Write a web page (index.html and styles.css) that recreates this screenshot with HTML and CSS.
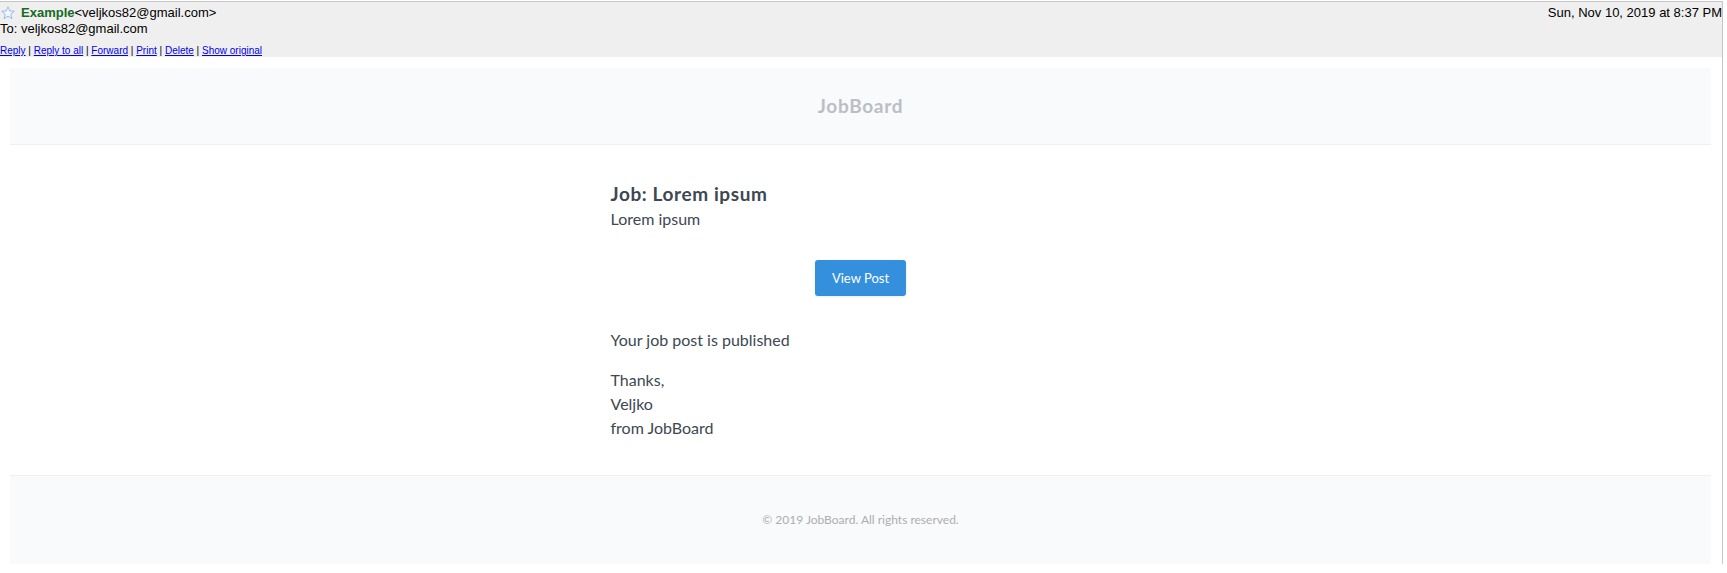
FILE: index.html
```html
<!DOCTYPE html>
<html>
<head>
<meta charset="utf-8">
<title>Job: Lorem ipsum</title>
<link rel="stylesheet" href="styles.css">
</head>
<body>
<div class="frame">
  <div class="gm-header">
    <div class="gm-row1">
      <div class="gm-from">
        <svg class="star" width="14" height="14" viewBox="0 0 14 14" aria-hidden="true">
          <polygon points="7,0.8 8.8,5 13.3,5.2 9.8,8.1 11,12.6 7,10.1 3,12.6 4.2,8.1 0.7,5.2 5.2,5" fill="#f2f7fe" stroke="#95bdee" stroke-width="1" stroke-linejoin="round"/>
        </svg>
        <span class="sender">Example</span><span class="addr">&lt;veljkos82@gmail.com&gt;</span>
      </div>
      <div class="gm-date">Sun, Nov 10, 2019 at 8:37 PM</div>
    </div>
    <div class="gm-to">To: veljkos82@gmail.com</div>
    <div class="gm-links">
      <a href="#">Reply</a> | <a href="#">Reply to all</a> | <a href="#">Forward</a> | <a href="#">Print</a> | <a href="#">Delete</a> | <a href="#">Show original</a>
    </div>
  </div>

  <div class="mail">
    <div class="mail-header">JobBoard</div>
    <div class="mail-body">
      <div class="inner">
        <h1 class="title">Job: Lorem ipsum</h1>
        <p class="lead">Lorem ipsum</p>
        <div class="action">
          <a class="button" href="#">View Post</a>
        </div>
        <p class="para">Your job post is published</p>
        <p class="para">Thanks,<br>Veljko<br>from JobBoard</p>
      </div>
    </div>
    <div class="mail-footer">© 2019 JobBoard. All rights reserved.</div>
  </div>
</div>
</body>
</html>
```

FILE: styles.css
```css
html, body {
  margin: 0;
  padding: 0;
  background: #ffffff;
}

body {
  padding-top: 1px;
}

.frame {
  width: 1722px;
  border-top: 1px solid #c6c6c6;
  border-right: 1px solid #c6c6c6;
}

.gm-header {
  background: #efefef;
  padding: 2px 0 0 0;
  font-family: "Liberation Sans", Arial, sans-serif;
  font-size: 13px;
  color: #000000;
}

.gm-row1 {
  display: flex;
  justify-content: space-between;
  align-items: center;
  height: 17px;
  line-height: 17px;
}

.gm-from {
  display: flex;
  align-items: center;
}

.star {
  display: block;
  margin: 0 6px 0 1px;
}

.sender {
  font-weight: bold;
  color: #136a23;
}

.gm-to {
  line-height: 15px;
}

.gm-links {
  margin-top: 9px;
  font-size: 10px;
  line-height: 12px;
}

.gm-links a {
  color: #0000ee;
  text-decoration: underline;
}

.mail {
  margin: 11px 11px 10px 10px;
  font-family: Lato, "Noto Sans", sans-serif;
  color: #3d4852;
}

.mail-header {
  background: #f8fafc;
  border-bottom: 1px solid #edeff2;
  padding: 25px 0;
  text-align: center;
  font-size: 19px;
  line-height: 26px;
  font-weight: bold;
  letter-spacing: 0.7px;
  color: #bbbfc3;
}

.mail-body {
  background: #ffffff;
}

.inner {
  width: 500px;
  margin: 0 auto;
  padding: 35px;
}

.title {
  margin: 0;
  font-size: 19px;
  line-height: 27px;
  font-weight: bold;
  letter-spacing: 0.6px;
  color: #3d4852;
}

.lead {
  margin: 0;
  font-size: 16px;
  line-height: 24px;
}

.action {
  display: flex;
  justify-content: center;
  margin: 29px 0 32px;
}

.button {
  display: block;
  background: #3490dc;
  color: #ffffff;
  text-decoration: none;
  font-size: 13px;
  line-height: 16px;
  padding: 10px 17px;
  border-radius: 3px;
  box-shadow: 0 1px 3px rgba(0, 0, 0, 0.08);
}

.para {
  margin: 0 0 16px;
  font-size: 16px;
  line-height: 24px;
}

.para:last-child {
  margin-bottom: 0;
}

.mail-footer {
  background: #f8fafc;
  border-top: 1px solid #edeff2;
  padding: 35px 0;
  text-align: center;
  font-size: 12px;
  line-height: 18px;
  color: #aeaeae;
}
```
